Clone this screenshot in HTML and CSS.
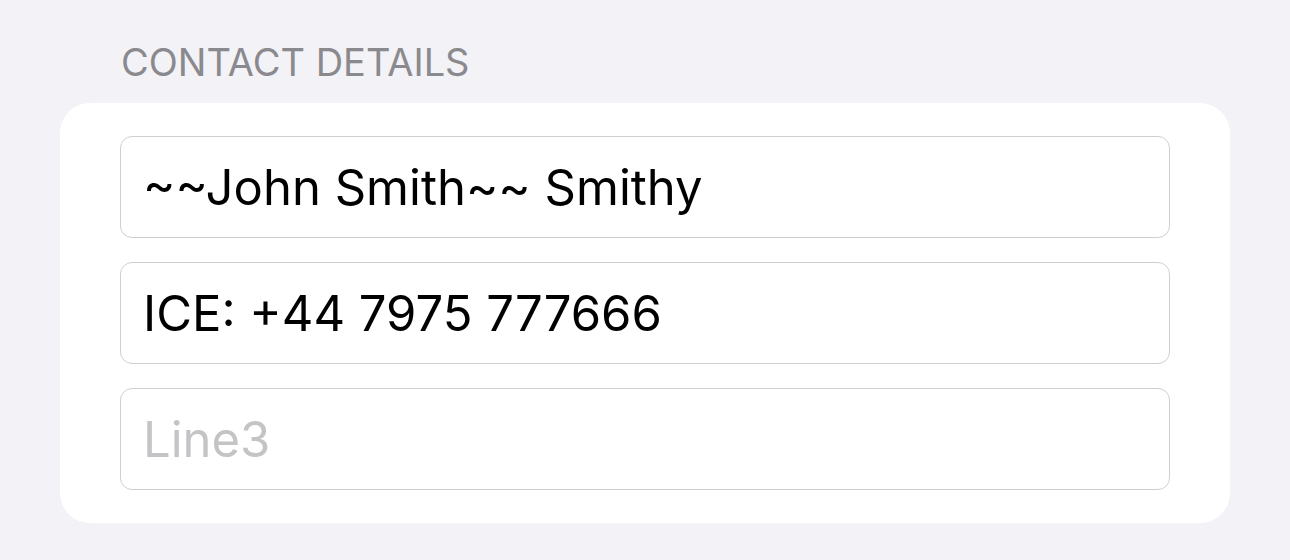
FILE: index.html
```html
<!DOCTYPE html>
<html>
<head>
<meta charset="utf-8">
<link rel="stylesheet" href="styles.css">
</head>
<body>
<div class="page">
  <div class="section-title">CONTACT DETAILS</div>
  <div class="card">
    <div class="field">~~John Smith~~ Smithy</div>
    <div class="field">ICE: +44 7975 777666</div>
    <div class="field placeholder">Line3</div>
  </div>
</div>
</body>
</html>
```
FILE: styles.css
```css
html, body {
  margin: 0;
  padding: 0;
  background: #f2f2f7;
  font-family: Inter, "Liberation Sans", sans-serif;
}
.page {
  padding: 40px 60px 0 60px;
}
.section-title {
  padding-left: 61px;
  font-size: 38px;
  line-height: 44px;
  color: #8a8a8e;
  height: 63px;
}
.card {
  background: #ffffff;
  border-radius: 30px;
  padding: 33px 60px;
  display: flex;
  flex-direction: column;
  gap: 24px;
}
.field {
  box-sizing: border-box;
  height: 102px;
  border: 1px solid #cfcfd2;
  border-radius: 12px;
  padding-left: 22px;
  display: flex;
  align-items: center;
  font-size: 49px;
  color: #000;
}
.placeholder {
  color: #c4c4c6;
}
```
